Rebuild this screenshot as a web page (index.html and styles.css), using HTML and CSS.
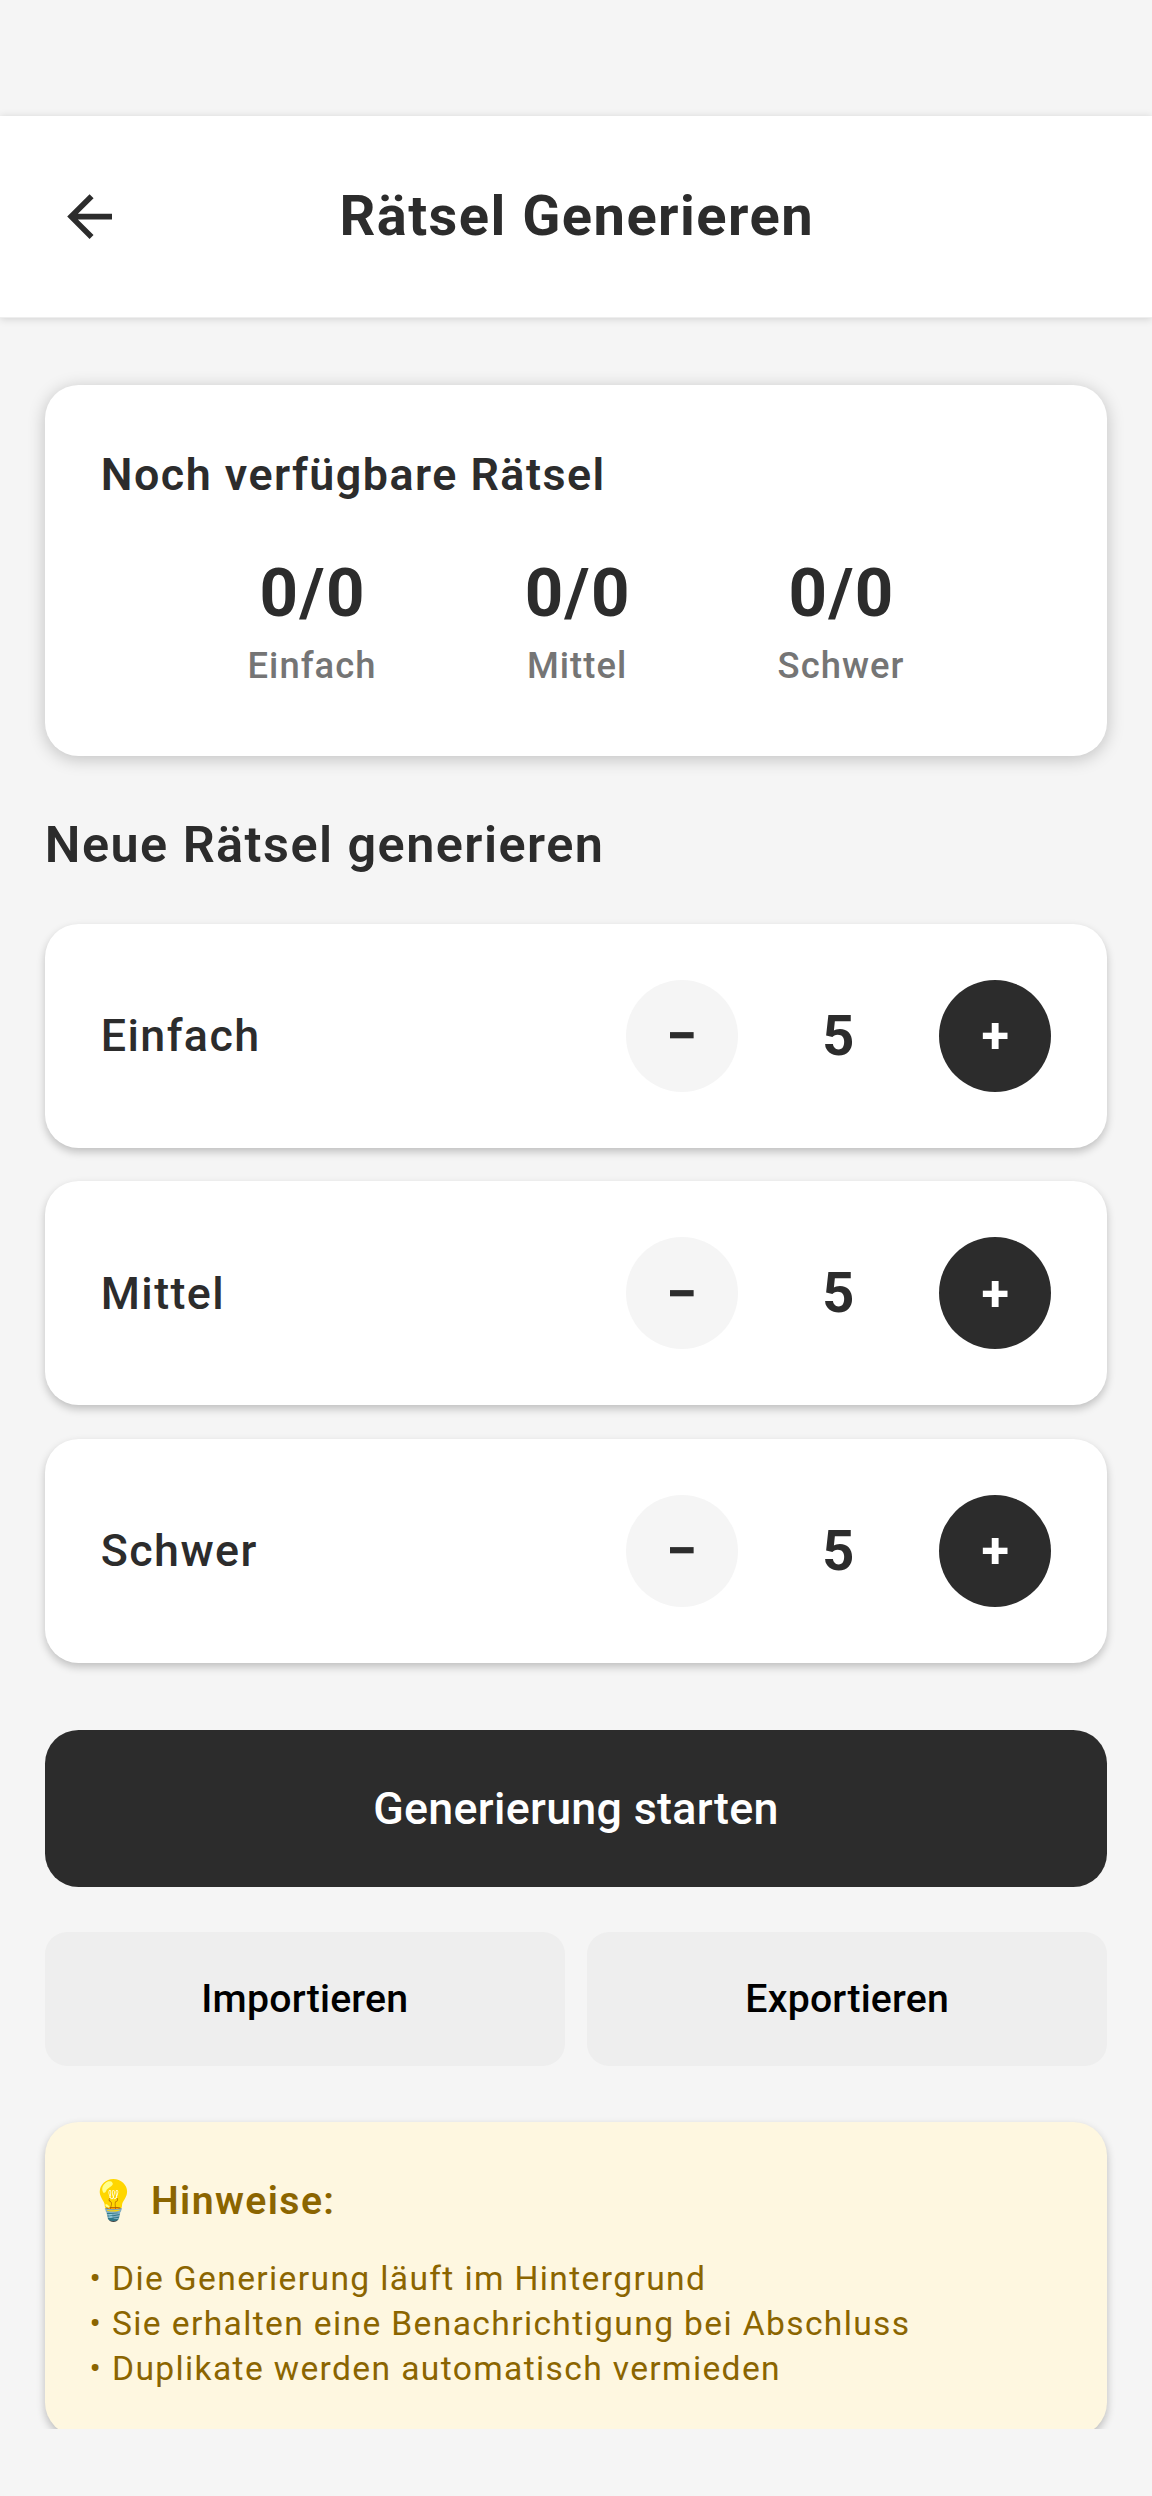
FILE: index.html
```html
<!DOCTYPE html>
<html lang="de">
<head>
<meta charset="utf-8">
<title>Rätsel Generieren</title>
<link rel="stylesheet" href="styles.css">
</head>
<body>
<header class="topbar">
  <button class="back" aria-label="Zurück">
    <svg class="back-icon" viewBox="0 0 24 24"><path fill="currentColor" d="M20 11H7.83l5.59-5.59L12 4l-8 8 8 8 1.41-1.41L7.83 13H20v-2z"/></svg>
  </button>
  <h1 class="title">Rätsel Generieren</h1>
</header>
<main class="content">
  <section class="card stats">
    <h2 class="card-title">Noch verfügbare Rätsel</h2>
    <div class="stat-row">
      <div class="stat"><span class="stat-value">0/0</span><span class="stat-label">Einfach</span></div>
      <div class="stat"><span class="stat-value">0/0</span><span class="stat-label">Mittel</span></div>
      <div class="stat"><span class="stat-value">0/0</span><span class="stat-label">Schwer</span></div>
    </div>
  </section>
  <h2 class="section-title">Neue Rätsel generieren</h2>
  <div class="levels">
    <div class="card level">
      <span class="level-name">Einfach</span>
      <button class="step minus">−</button><span class="count">5</span><button class="step plus">+</button>
    </div>
    <div class="card level">
      <span class="level-name">Mittel</span>
      <button class="step minus">−</button><span class="count">5</span><button class="step plus">+</button>
    </div>
    <div class="card level">
      <span class="level-name">Schwer</span>
      <button class="step minus">−</button><span class="count">5</span><button class="step plus">+</button>
    </div>
  </div>
  <button class="start">Generierung starten</button>
  <div class="actions">
    <button class="action">Importieren</button>
    <button class="action">Exportieren</button>
  </div>
  <section class="hints">
    <h3 class="hints-title">💡 Hinweise:</h3>
    <p class="hint">• Die Generierung läuft im Hintergrund</p>
    <p class="hint">• Sie erhalten eine Benachrichtigung bei Abschluss</p>
    <p class="hint">• Duplikate werden automatisch vermieden</p>
  </section>
</main>
</body>
</html>
```
FILE: styles.css
```css
* { box-sizing: border-box; margin: 0; padding: 0; }

body {
  width: 1152px;
  height: 2496px;
  overflow: hidden;
  padding-top: 115.6px;
  background: #f5f5f5;
  color: #2c2c2c;
  font-family: Roboto, "Noto Color Emoji", sans-serif;
  letter-spacing: 1.4px;
}

button { border: 0; font-family: inherit; }

.topbar {
  position: relative;
  z-index: 1;
  display: grid;
  grid-template-columns: 112px 1fr 112px;
  align-items: center;
  height: 202px;
  padding: 0 33.6px;
  background: #fff;
  border-bottom: 1px solid #eee;
  box-shadow: 0 1px 8px rgba(0, 0, 0, .15);
}

.back {
  display: flex;
  align-items: center;
  justify-content: center;
  height: 112px;
  background: none;
  color: #2c2c2c;
}

.back-icon { width: 67.2px; height: 67.2px; }

.title {
  padding: 1px 0 0 1.5px;
  font-size: 56px;
  font-weight: 700;
  line-height: 67px;
  letter-spacing: 1.46px;
  text-align: center;
}

.content {
  height: 2111.4px;
  overflow: hidden;
  padding: 67.2px 44.8px 0;
}

.card {
  background: #fff;
  border-radius: 33.6px;
}

.stats {
  height: 371.2px;
  padding: 56px;
  box-shadow: 0 3px 17px rgba(0, 0, 0, .22);
}

.card-title {
  margin-bottom: 44.8px;
  font-size: 44.8px;
  font-weight: 600;
  line-height: 67.2px;
  letter-spacing: 1.48px;
}

.stat-row { display: flex; justify-content: space-evenly; }

.stat {
  display: flex;
  flex-direction: column;
  align-items: center;
  gap: 11.2px;
}

.stat-value {
  padding-left: 1.4px;
  font-size: 67.2px;
  font-weight: 700;
  line-height: 80px;
}

.stat-label {
  color: #757575;
  font-size: 36.4px;
  font-weight: 500;
  line-height: 44.8px;
  letter-spacing: 1.05px;
}

.section-title {
  margin: 56px 0 46.4px;
  font-size: 50.4px;
  font-weight: 600;
  line-height: 65.2px;
  letter-spacing: 1.46px;
}

.levels { display: grid; gap: 33.6px; }

.level {
  display: flex;
  align-items: center;
  height: 224px;
  padding: 0 56px;
  box-shadow: 0 4px 9px rgba(0, 0, 0, .22);
}

.level-name {
  flex: 1;
  font-size: 44.8px;
  font-weight: 500;
}

.step {
  width: 112px;
  height: 112px;
  border-radius: 50%;
  font-size: 50.4px;
  font-weight: 700;
  text-align: center;
}

.minus {
  padding-top: 1px;
  background: #f5f5f5;
  color: #2c2c2c;
  font-size: 56px;
}

.plus { background: #2c2c2c; color: #fff; }

.count {
  width: 201.6px;
  padding-left: 1.4px;
  font-size: 56px;
  font-weight: 700;
  text-align: center;
}

.start {
  display: block;
  width: 100%;
  height: 156.8px;
  margin-top: 67.2px;
  border-radius: 33.6px;
  background: #2c2c2c;
  color: #fff;
  font-size: 44.8px;
  font-weight: 500;
  letter-spacing: .3px;
}

.actions {
  display: grid;
  grid-template-columns: 1fr 1fr;
  gap: 22.4px;
  margin-top: 44.8px;
}

.action {
  height: 134.4px;
  border-radius: 22.4px;
  background: #eee;
  color: #000;
  font-size: 39.2px;
  font-weight: 500;
  letter-spacing: .22px;
}

.hints {
  height: 313.6px;
  margin-top: 56px;
  padding: 56.8px 44.8px 0;
  border-radius: 33.6px;
  background: #fef7e0;
  color: #8b6500;
  box-shadow: 0 4px 9px rgba(0, 0, 0, .24);
}

.hints-title {
  margin-bottom: 32.8px;
  font-size: 39.2px;
  font-weight: 600;
  line-height: 44px;
}

.hint {
  font-size: 33.6px;
  line-height: 45px;
  letter-spacing: 1.37px;
}
```
